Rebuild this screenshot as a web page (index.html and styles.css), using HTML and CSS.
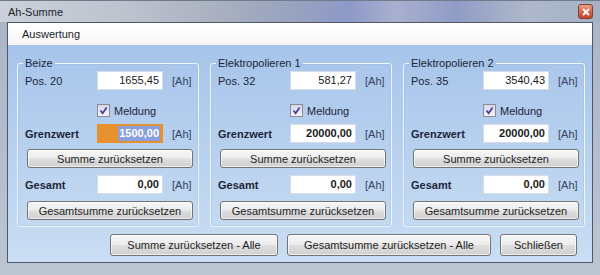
FILE: index.html
```html
<!DOCTYPE html>
<html lang="de">
<head>
    <meta charset="UTF-8">
    <title>Ah-Summe</title>
    <link rel="stylesheet" href="styles.css">
</head>
<body>
    <div class="window">
        <div class="titlebar">
            <span class="title">Ah-Summe</span>
            <span class="close-btn">
                <svg width="8" height="8" viewBox="0 0 8 8"><path d="M1 1 L7 7 M7 1 L1 7" stroke="#fff" stroke-width="1.8" fill="none"/></svg>
            </span>
        </div>
        <div class="frame">
            <div class="client">
                <div class="tab-header">Auswertung</div>
                <div class="panel">
                    <div class="groups">
                        <fieldset class="group group-first">
                            <legend>Beize</legend>
                            <div class="row row-pos">
                                <span class="label">Pos. 20</span>
                                <span class="field">1655,45</span>
                                <span class="unit">[Ah]</span>
                            </div>
                            <div class="check-row">
                                <span class="checkbox"><svg width="11" height="11" viewBox="0 0 11 11"><path d="M2.5 5.5 L4.6 8.2 L8.6 2.4" stroke="#4a3b9e" stroke-width="1.7" fill="none"/></svg></span>
                                <span>Meldung</span>
                            </div>
                            <div class="row row-limit">
                                <span class="label bold">Grenzwert</span>
                                <span class="field bold field-active"><span class="selection">1500,00</span></span>
                                <span class="unit">[Ah]</span>
                            </div>
                            <button class="btn btn-group">Summe zurücksetzen</button>
                            <div class="row row-total">
                                <span class="label bold">Gesamt</span>
                                <span class="field bold">0,00</span>
                                <span class="unit">[Ah]</span>
                            </div>
                            <button class="btn btn-group btn-last">Gesamtsumme zurücksetzen</button>
                        </fieldset>

                        <fieldset class="group">
                            <legend>Elektropolieren 1</legend>
                            <div class="row row-pos">
                                <span class="label">Pos. 32</span>
                                <span class="field">581,27</span>
                                <span class="unit">[Ah]</span>
                            </div>
                            <div class="check-row">
                                <span class="checkbox"><svg width="11" height="11" viewBox="0 0 11 11"><path d="M2.5 5.5 L4.6 8.2 L8.6 2.4" stroke="#4a3b9e" stroke-width="1.7" fill="none"/></svg></span>
                                <span>Meldung</span>
                            </div>
                            <div class="row row-limit">
                                <span class="label bold">Grenzwert</span>
                                <span class="field bold">20000,00</span>
                                <span class="unit">[Ah]</span>
                            </div>
                            <button class="btn btn-group">Summe zurücksetzen</button>
                            <div class="row row-total">
                                <span class="label bold">Gesamt</span>
                                <span class="field bold">0,00</span>
                                <span class="unit">[Ah]</span>
                            </div>
                            <button class="btn btn-group btn-last">Gesamtsumme zurücksetzen</button>
                        </fieldset>

                        <fieldset class="group">
                            <legend>Elektropolieren 2</legend>
                            <div class="row row-pos">
                                <span class="label">Pos. 35</span>
                                <span class="field">3540,43</span>
                                <span class="unit">[Ah]</span>
                            </div>
                            <div class="check-row">
                                <span class="checkbox"><svg width="11" height="11" viewBox="0 0 11 11"><path d="M2.5 5.5 L4.6 8.2 L8.6 2.4" stroke="#4a3b9e" stroke-width="1.7" fill="none"/></svg></span>
                                <span>Meldung</span>
                            </div>
                            <div class="row row-limit">
                                <span class="label bold">Grenzwert</span>
                                <span class="field bold">20000,00</span>
                                <span class="unit">[Ah]</span>
                            </div>
                            <button class="btn btn-group">Summe zurücksetzen</button>
                            <div class="row row-total">
                                <span class="label bold">Gesamt</span>
                                <span class="field bold">0,00</span>
                                <span class="unit">[Ah]</span>
                            </div>
                            <button class="btn btn-group btn-last">Gesamtsumme zurücksetzen</button>
                        </fieldset>
                    </div>

                    <div class="actions">
                        <button class="btn btn-reset-all">Summe zurücksetzen - Alle</button>
                        <button class="btn btn-total-all">Gesamtsumme zurücksetzen - Alle</button>
                        <button class="btn btn-close">Schließen</button>
                    </div>
                </div>
            </div>
        </div>
    </div>
</body>
</html>
```

FILE: styles.css
```css
body {
    margin: 0;
    font-family: "Liberation Sans", Arial, sans-serif;
    font-size: 11px;
    color: #1c2638;
    background-color: #9aa6b8;
}
.window {
    width: 600px;
    height: 275px;
    overflow: hidden;
    background: linear-gradient(#a9b4c6, #bcc5d2);
}
.titlebar {
    height: 22px;
    display: flex;
    align-items: center;
    justify-content: space-between;
    padding: 0 7px 0 8px;
    background: linear-gradient(90deg, #cbd0da 0%, #bec4cf 20%, #a7aebe 38%, #97a1c0 50%, #8d99c8 58%, #a9b0cf 66%, #909cc6 76%, #aeb8ca 88%, #a4b0c4 100%);
    box-shadow: inset 0 1px 0 #6f7a8c;
}
.title {
    color: #1a1f2a;
    padding-top: 1px;
}
.close-btn {
    width: 13px;
    height: 13px;
    margin-top: 1px;
    display: flex;
    align-items: center;
    justify-content: center;
    border: 1px solid #8a3a26;
    border-radius: 3px;
    background: linear-gradient(#eaa48c, #d4684a 50%, #c0452a);
}
.frame {
    padding: 0 7px 12px 7px;
}
.client {
    border: 1px solid #4e5868;
}
.tab-header {
    height: 22px;
    line-height: 22px;
    padding-left: 14px;
    color: #1a1f2a;
    background: linear-gradient(#ffffff, #f6f6f6);
}
.panel {
    height: 217px;
    box-sizing: border-box;
    padding-top: 11px;
    background: linear-gradient(#a6c4ea, #bcd4f0 60%, #cadef4);
}
.groups {
    display: flex;
    gap: 11px;
    padding: 0 7px 0 9px;
}
.group {
    flex: 1;
    min-width: 0;
    margin: 0;
    padding: 0 5px 6px 7px;
    border: 1px solid #eef5fc;
    border-radius: 3px;
    box-shadow: inset 0 0 0 1px rgba(140, 170, 210, 0.25);
}
.group legend {
    padding: 0 2px;
    margin-left: -2px;
    line-height: 14px;
    color: #1c2638;
}
.row {
    display: flex;
    align-items: center;
    height: 19px;
}
.row-pos {
    margin-top: 1px;
}
.row-limit {
    margin-top: 6px;
}
.row-total {
    margin-top: 7px;
}
.label {
    width: 72px;
    flex-shrink: 0;
}
.bold {
    font-weight: bold;
}
.field {
    width: 66px;
    height: 19px;
    box-sizing: border-box;
    padding-right: 3px;
    line-height: 17px;
    text-align: right;
    background-color: #ffffff;
    border: 1px solid #d6dde8;
    color: #1a1a1a;
}
.field-active {
    background-color: #e6902e;
    border-color: #e6902e;
    padding-right: 2px;
}
.selection {
    display: inline-block;
    height: 15px;
    line-height: 15px;
    margin-top: 1px;
    padding: 0 1px;
    color: #ffffff;
    background-color: #8aa0dc;
}
.unit {
    margin-left: 9px;
    color: #34465f;
}
.check-row {
    display: flex;
    align-items: center;
    gap: 4px;
    height: 15px;
    margin-top: 13px;
    padding-left: 72px;
}
.checkbox {
    width: 13px;
    height: 13px;
    box-sizing: border-box;
    display: flex;
    align-items: center;
    justify-content: center;
    border: 1px solid #8b8b95;
    background: linear-gradient(#d9d6e8, #f4f3fa);
}
.btn {
    height: 19px;
    padding: 0;
    font-family: "Liberation Sans", Arial, sans-serif;
    font-size: 11px;
    color: #1e1e1e;
    border: 1px solid #747474;
    border-radius: 3px;
    background: linear-gradient(#f7f7f7 0%, #ececec 48%, #dedede 52%, #d0d0d0 100%);
    box-shadow: inset 0 0 0 1px rgba(255, 255, 255, 0.6);
}
.btn-group {
    display: block;
    width: 166px;
    margin: 6px 0 0 2px;
}
.btn-last {
    margin-top: 7px;
}
.actions {
    display: flex;
    justify-content: flex-end;
    gap: 9px;
    margin-top: 7px;
    padding-right: 15px;
}
.actions .btn {
    height: 22px;
}
.btn-reset-all {
    width: 168px;
}
.btn-total-all {
    width: 204px;
}
.btn-close {
    width: 77px;
}
```
